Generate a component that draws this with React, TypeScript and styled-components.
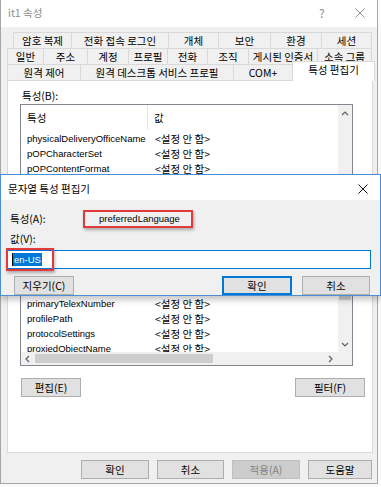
import React from "react";
import styled, { createGlobalStyle } from "styled-components";

const GlobalStyle = createGlobalStyle`
  * { box-sizing: border-box; }
  body {
    margin: 0;
    background: #fafafa;
    font-family: "Noto Sans CJK KR", "Noto Sans", sans-serif;
    font-size: 10.5px;
    line-height: 14px;
    color: #000;
  }
`;

const tabRows: { label: string; w: number; active?: boolean }[][] = [
  [
    { label: "암호 복제", w: 59 },
    { label: "전화 접속 로그인", w: 98 },
    { label: "개체", w: 51 },
    { label: "보안", w: 53 },
    { label: "환경", w: 52 },
    { label: "세션", w: 51 },
  ],
  [
    { label: "일반", w: 37 },
    { label: "주소", w: 45 },
    { label: "계정", w: 42 },
    { label: "프로필", w: 40 },
    { label: "전화", w: 41 },
    { label: "조직", w: 42 },
    { label: "게시된 인증서", w: 70 },
    { label: "소속 그룹", w: 55 },
  ],
  [
    { label: "원격 제어", w: 74 },
    { label: "원격 데스크톱 서비스 프로필", w: 154 },
    { label: "COM+", w: 60 },
    { label: "특성 편집기", w: 83, active: true },
  ],
];

const attributes = [
  "physicalDeliveryOfficeName",
  "pOPCharacterSet",
  "pOPContentFormat",
  "postalAddress",
  "postalCode",
  "postOfficeBox",
  "preferredDeliveryMethod",
  "preferredLanguage",
  "preferredOU",
  "primaryGroupID",
  "primaryInternationalISDNNumber",
  "primaryTelexNumber",
  "profilePath",
  "protocolSettings",
  "proxiedObjectName",
];

const Window = styled.div`
  position: relative;
  width: 378px;
  height: 484px;
  background: #f0f0f0;
  border: 1px solid #a6a6a6;
  border-top: none;
`;

const TitleBar = styled.div`
  height: 27px;
  background: #fff;
  display: flex;
  align-items: center;
  padding: 0 0 2px 7px;
  color: #8c8c8c;
`;

const TitleText = styled.span`
  flex: 1;
`;

const HelpMark = styled.span`
  width: 36px;
  font-size: 12px;
  color: #8c8c8c;
`;

const CloseBox = styled.span<{ $dark?: boolean }>`
  width: 22px;
  display: flex;
  align-items: center;
  svg line {
    stroke: ${(p) => (p.$dark ? "#111" : "#8c8c8c")};
  }
`;

const Body = styled.div`
  padding-top: 5px;
`;

const TabRow = styled.div<{ $indent: number }>`
  display: flex;
  align-items: flex-end;
  height: 16px;
  padding-left: ${(p) => p.$indent}px;
`;

const Tab = styled.div<{ $w: number; $active?: boolean }>`
  position: relative;
  z-index: ${(p) => (p.$active ? 2 : 1)};
  flex: none;
  width: ${(p) => p.$w}px;
  height: ${(p) => (p.$active ? 20 : 16)}px;
  margin-right: -1px;
  margin-bottom: ${(p) => (p.$active ? -1 : 0)}px;
  padding-bottom: ${(p) => (p.$active ? 4 : 0)}px;
  display: flex;
  align-items: center;
  justify-content: center;
  white-space: nowrap;
  overflow: hidden;
  background: ${(p) => (p.$active ? "#fff" : "#f0f0f0")};
  border: 1px solid #d9d9d9;
  border-bottom: none;
`;

const Panel = styled.div`
  width: 366px;
  height: 373px;
  margin-left: 6px;
  background: #fff;
  border: 1px solid #d9d9d9;
  padding: 8px 0 0 12px;
`;

const FieldLabel = styled.div`
  padding-left: 2px;
  height: 15px;
`;

const ListBox = styled.div`
  width: 333px;
  height: 262px;
  border: 1px solid #828790;
  display: grid;
  grid-template-columns: 1fr 14px;
  grid-template-rows: 1fr 13px;
  overflow: hidden;
`;

const ListView = styled.div`
  overflow: hidden;
`;

const ListHeader = styled.div`
  height: 26px;
  display: grid;
  grid-template-columns: 127px 1fr;
  align-items: center;
  padding-bottom: 1px;
`;

const HeaderCell = styled.div<{ $divider?: boolean }>`
  height: 100%;
  display: flex;
  align-items: center;
  padding-left: 6px;
  border-right: ${(p) => (p.$divider ? "1px solid #e5e5e5" : "none")};
`;

const ListRow = styled.div`
  height: 15px;
  display: grid;
  grid-template-columns: 127px 1fr;
  align-items: center;
  white-space: nowrap;
`;

const Latin = styled.span`
  font-family: "Liberation Sans", "Noto Sans", sans-serif;
  font-size: 9.5px;
`;

const Cell = styled(Latin)`
  padding-left: 6px;
  overflow: hidden;
`;

const ValueCell = styled.div`
  padding-left: 7px;
`;

const VScroll = styled.div`
  background: #f0f0f0;
  display: grid;
  grid-template-rows: 17px 1fr 14px;
`;

const HScroll = styled.div`
  background: #f0f0f0;
  display: grid;
  grid-template-columns: 14px 1fr 14px;
`;

const Corner = styled.div`
  background: #f0f0f0;
`;

const ArrowBtn = styled.div`
  display: flex;
  align-items: center;
  justify-content: center;
`;

const VTrack = styled.div`
  padding: 80px 1px 38px;
`;

const HTrack = styled.div`
  padding: 2px 111px 2px 0;
`;

const Thumb = styled.div`
  width: 100%;
  height: 100%;
  background: #cdcdcd;
`;

const ButtonRow = styled.div<{ $pad: string; $gap?: number; $end?: boolean; $top: number }>`
  display: flex;
  justify-content: ${(p) => (p.$end ? "flex-end" : "space-between")};
  gap: ${(p) => p.$gap ?? 0}px;
  padding: ${(p) => p.$pad};
  margin-top: ${(p) => p.$top}px;
`;

const Button = styled.div<{ $w: number; $focus?: boolean; $disabled?: boolean }>`
  width: ${(p) => p.$w}px;
  height: 19px;
  display: flex;
  align-items: center;
  justify-content: center;
  white-space: nowrap;
  background: ${(p) => (p.$disabled ? "#cccccc" : "#e1e1e1")};
  color: ${(p) => (p.$disabled ? "#838383" : "#000")};
  border: ${(p) =>
    p.$focus ? "2px solid #0078d7" : p.$disabled ? "1px solid #bfbfbf" : "1px solid #adadad"};
`;

const Dialog = styled.div`
  position: absolute;
  top: 174px;
  left: -1px;
  width: 381px;
  height: 122px;
  background: #f0f0f0;
  border: 1px solid #4a8ed6;
  box-shadow: 0 4px 6px rgba(0, 0, 0, 0.22);
  z-index: 5;
`;

const DialogTitle = styled.div`
  height: 25px;
  background: #fff;
  display: flex;
  align-items: center;
  padding: 2px 0 0 7px;
`;

const DialogBody = styled.div`
  padding: 10px 0 0 9px;
`;

const AttrRow = styled.div`
  display: flex;
  align-items: center;
  height: 18px;
`;

const AttrLabel = styled.div`
  width: 73px;
`;

const Highlight = styled.div`
  width: 110px;
  height: 18px;
  border: 2px solid #e2393c;
  box-shadow: 1px 2px 3px rgba(0, 0, 0, 0.3);
  display: flex;
  align-items: center;
  justify-content: center;
  padding-left: 3px;
`;

const ValueLabel = styled.div`
  margin-top: 4px;
  height: 14px;
`;

const InputBox = styled.div`
  position: relative;
  margin: 4px 0 0 -4px;
  width: 365px;
  height: 19px;
  background: #fff;
  border: 1px solid #0078d7;
  display: flex;
  align-items: center;
  padding-left: 5px;
`;

const Caret = styled.span`
  width: 1px;
  height: 13px;
  background: #000;
`;

const Selected = styled(Latin)`
  background: #0078d7;
  color: #fff;
  padding: 0 1px;
  line-height: 13px;
`;

const Annotation = styled.div`
  position: absolute;
  left: -1px;
  top: -3px;
  width: 48px;
  height: 23px;
  border: 2px solid #e2393c;
  box-shadow: 1px 2px 3px rgba(0, 0, 0, 0.3);
`;

const Close = ({ dark }: { dark?: boolean }) => (
  <CloseBox $dark={dark}>
    <svg width="10" height="10" viewBox="0 0 10 10">
      <line x1="0.5" y1="0.5" x2="9.5" y2="9.5" strokeWidth="1" />
      <line x1="9.5" y1="0.5" x2="0.5" y2="9.5" strokeWidth="1" />
    </svg>
  </CloseBox>
);

const Chevron = ({ dir }: { dir: "up" | "down" | "left" | "right" }) => {
  const pts = {
    up: "1,5 4,2 7,5",
    down: "1,2 4,5 7,2",
    left: "5,1 2,4 5,7",
    right: "2,1 5,4 2,7",
  }[dir];
  return (
    <svg width="8" height="8" viewBox="0 0 8 8">
      <polyline points={pts} fill="none" stroke="#606060" strokeWidth="1.2" />
    </svg>
  );
};

export default function App() {
  return (
    <>
      <GlobalStyle />
      <Window>
        <TitleBar>
          <TitleText>it1 속성</TitleText>
          <HelpMark>?</HelpMark>
          <Close />
        </TitleBar>
        <Body>
          {tabRows.map((row, i) => (
            <TabRow key={i} $indent={i === 0 ? 12 : 6}>
              {row.map((t) => (
                <Tab key={t.label} $w={t.w} $active={t.active}>
                  {t.label}
                </Tab>
              ))}
            </TabRow>
          ))}
          <Panel>
            <FieldLabel>특성(B):</FieldLabel>
            <ListBox>
              <ListView>
                <ListHeader>
                  <HeaderCell $divider>특성</HeaderCell>
                  <HeaderCell>값</HeaderCell>
                </ListHeader>
                {attributes.map((a) => (
                  <ListRow key={a}>
                    <Cell>{a}</Cell>
                    <ValueCell>&lt;설정 안 함&gt;</ValueCell>
                  </ListRow>
                ))}
              </ListView>
              <VScroll>
                <ArrowBtn>
                  <Chevron dir="up" />
                </ArrowBtn>
                <VTrack>
                  <Thumb />
                </VTrack>
                <ArrowBtn>
                  <Chevron dir="down" />
                </ArrowBtn>
              </VScroll>
              <HScroll>
                <ArrowBtn>
                  <Chevron dir="left" />
                </ArrowBtn>
                <HTrack>
                  <Thumb />
                </HTrack>
                <ArrowBtn>
                  <Chevron dir="right" />
                </ArrowBtn>
              </HScroll>
              <Corner />
            </ListBox>
            <ButtonRow $pad="0 7px 0 1px" $top={12}>
              <Button $w={60}>편집(E)</Button>
              <Button $w={70}>필터(F)</Button>
            </ButtonRow>
          </Panel>
          <ButtonRow $pad="0 5px 0 0" $gap={8} $end $top={7}>
            <Button $w={68}>확인</Button>
            <Button $w={67}>취소</Button>
            <Button $w={68} $disabled>
              적용(A)
            </Button>
            <Button $w={64}>도움말</Button>
          </ButtonRow>
        </Body>

        <Dialog>
          <DialogTitle>
            <TitleText>문자열 특성 편집기</TitleText>
            <Close dark />
          </DialogTitle>
          <DialogBody>
            <AttrRow>
              <AttrLabel>특성(A):</AttrLabel>
              <Highlight>
                <Latin>preferredLanguage</Latin>
              </Highlight>
            </AttrRow>
            <ValueLabel>값(V):</ValueLabel>
            <InputBox>
              <Caret />
              <Selected>en-US</Selected>
              <Annotation />
            </InputBox>
            <ButtonRow $pad="0 10px 0 4px" $top={7}>
              <Button $w={60}>지우기(C)</Button>
              <ButtonRow $pad="0" $gap={10} $end $top={0}>
                <Button $w={70} $focus>
                  확인
                </Button>
                <Button $w={68}>취소</Button>
              </ButtonRow>
            </ButtonRow>
          </DialogBody>
        </Dialog>
      </Window>
    </>
  );
}
